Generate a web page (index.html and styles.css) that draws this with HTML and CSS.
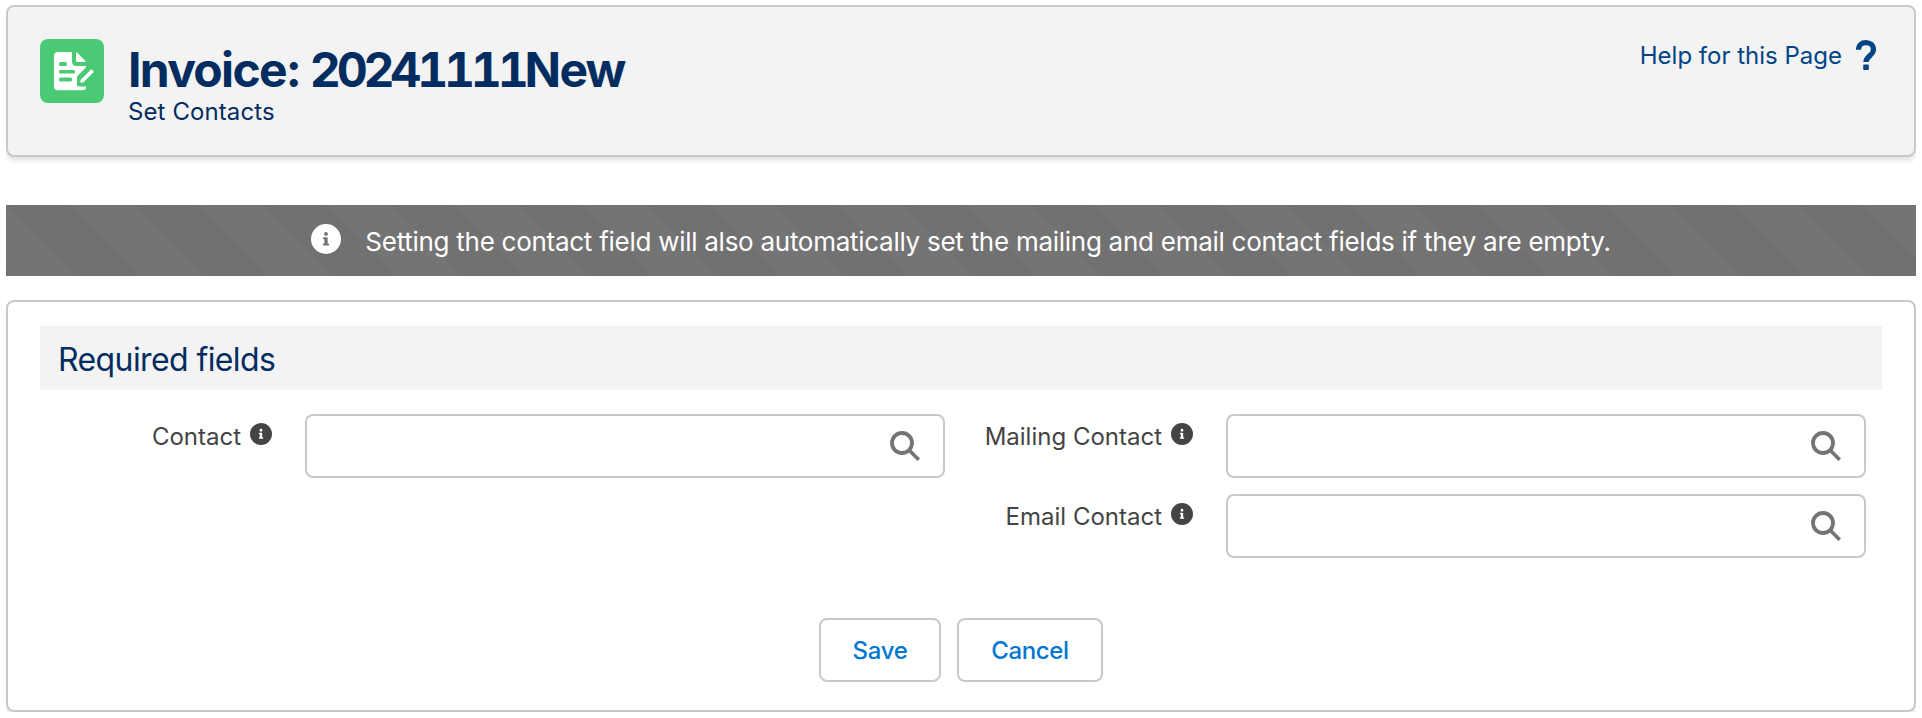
FILE: index.html
```html
<!DOCTYPE html>
<html lang="en">
<head>
    <meta charset="UTF-8">
    <meta name="viewport" content="width=device-width, initial-scale=1.0">
    <title>Set Contacts</title>
    <link rel="stylesheet" href="styles.css">
</head>
<body>

    <!-- Shared icons -->
    <svg class="icon-defs" xmlns="http://www.w3.org/2000/svg">
        <symbol id="icon-info" viewBox="0 0 30 30">
            <path fill-rule="evenodd" d="M15 0a15 15 0 1 1 0 30a15 15 0 0 1 0-30zM15 8a1.9 1.9 0 1 0 0 3.8a1.9 1.9 0 0 0 0-3.8zM12.7 13.3c-.4 0-.7.3-.7.7v.6c0 .4.3.7.7.7h.7v4.2h-.7c-.4 0-.7.3-.7.7v.7c0 .4.3.7.7.7h4.6c.4 0 .7-.3.7-.7v-.7c0-.4-.3-.7-.7-.7h-.7V14c0-.4-.3-.7-.7-.7z"/>
        </symbol>
        <symbol id="icon-search" viewBox="0 0 30 30">
            <circle cx="12" cy="12" r="10" fill="none" stroke="currentColor" stroke-width="3.8"/>
            <path d="M19 19l9.8 9.8" fill="none" stroke="currentColor" stroke-width="3.6"/>
        </symbol>
    </svg>

    <header class="page-header">
        <div class="header-icon">
            <svg width="64" height="64" viewBox="0 0 64 64">
                <path fill="#fff" d="M18 13H32V22.500Q32 27 36.500 27H46V28.500L37.500 37.200V47H46V48Q46 51.300 42 51.300H18Q14 51.300 14 47.300V17Q14 13 18 13z"/>
                <path fill="#fff" d="M36 14.200Q36 12.800 37 13.600L45.600 22.200Q46 23 44.800 23H37.200Q36 23 36 21.800z"/>
                <rect x="19" y="23" width="8" height="4" rx="1.500" fill="#4bca76"/>
                <rect x="19" y="31" width="16" height="3.600" rx="1.500" fill="#4bca76"/>
                <rect x="19" y="38.500" width="13" height="4" rx="1.500" fill="#4bca76"/>
                <path fill="#4bca76" d="M47 27.500L37.800 36.700Q37 37.600 37 39V45Q37 47.500 39.500 47.500H47V45L56 35z"/>
                <path fill="#fff" d="M41 40.500L50.700 30.800Q51.500 30 52.300 30.800L53.300 31.800Q54 32.600 53.300 33.400L43.600 43.100Q43 43.700 42 43.700H41.200Q40.400 43.700 40.400 43V41.800Q40.400 41.100 41 40.500z"/>
            </svg>
        </div>
        <div class="header-text">
            <h1>Invoice: <span class="number">20241111</span>New</h1>
            <p>Set Contacts</p>
        </div>
        <a class="help-link" href="#">
            <span>Help for this Page</span>
            <svg width="20" height="30" viewBox="0 0 20 30">
                <path d="M2.500 9.800C2.500 5 5.600 2.600 10 2.600S17.500 5.300 17.500 9.500C17.500 16 10 15.700 10 22" fill="none" stroke="currentColor" stroke-width="5.200" stroke-linecap="butt"/>
                <rect x="7.200" y="24.500" width="5.600" height="5.500" rx="1" fill="currentColor"/>
            </svg>
        </a>
    </header>

    <div class="notify">
        <svg class="notify-icon"><use href="#icon-info"/></svg>
        <span>Setting the contact field will also automatically set the mailing and email contact fields if they are empty.</span>
    </div>

    <form class="card">
        <h2>Required fields</h2>

        <div class="fields">
            <div class="column">
                <div class="field">
                    <label for="contact">Contact <svg class="info"><use href="#icon-info"/></svg></label>
                    <div class="lookup">
                        <input type="text" id="contact">
                        <svg class="search"><use href="#icon-search"/></svg>
                    </div>
                </div>
            </div>
            <div class="column">
                <div class="field">
                    <label for="mailing">Mailing Contact <svg class="info"><use href="#icon-info"/></svg></label>
                    <div class="lookup">
                        <input type="text" id="mailing">
                        <svg class="search"><use href="#icon-search"/></svg>
                    </div>
                </div>
                <div class="field">
                    <label for="email">Email Contact <svg class="info"><use href="#icon-info"/></svg></label>
                    <div class="lookup">
                        <input type="text" id="email">
                        <svg class="search"><use href="#icon-search"/></svg>
                    </div>
                </div>
            </div>
        </div>

        <div class="actions">
            <button type="button" class="save">Save</button>
            <button type="button" class="cancel">Cancel</button>
        </div>
    </form>

</body>
</html>
```
FILE: styles.css
```css
* {
    box-sizing: border-box;
}

body {
    margin: 5px 6px 0;
    font-family: Inter, "Liberation Sans", sans-serif;
    font-size: 24px;
    color: #444;
    background: #fff;
}

h1, h2, p {
    margin: 0;
}

.icon-defs {
    display: none;
}

.page-header {
    display: flex;
    align-items: flex-start;
    height: 152px;
    padding: 32px;
    background: #f3f3f3;
    border: 2px solid #c9c9c9;
    border-radius: 8px;
    box-shadow: 0 4px 4px rgba(0, 0, 0, 0.1);
    color: #032d60;
}

.header-icon {
    width: 64px;
    height: 64px;
    border-radius: 8px;
    background: #4bca76;
}

.header-text {
    flex: 1;
    margin-left: 24px;
}

h1 {
    padding-top: 3px;
    font-size: 48px;
    line-height: 56px;
    font-weight: 700;
    letter-spacing: -1.7px;
}

.number {
    font-variant-numeric: tabular-nums;
    letter-spacing: -4.2px;
}

.header-text p {
    line-height: 28px;
    letter-spacing: 0.1px;
}

.help-link {
    display: flex;
    gap: 14px;
    margin-right: 6px;
    line-height: 34px;
    color: #014486;
    text-decoration: none;
}

.help-link svg {
    margin-top: 1px;
}

.notify {
    display: flex;
    justify-content: center;
    gap: 24px;
    height: 71px;
    margin-top: 48px;
    padding: 19px 0;
    color: #fff;
    font-size: 26px;
    line-height: 36px;
    letter-spacing: -0.27px;
    background-color: #747474;
    background-image: linear-gradient(45deg, rgba(0, 0, 0, 0.025) 25%, transparent 25%, transparent 50%, rgba(0, 0, 0, 0.025) 50%, rgba(0, 0, 0, 0.025) 75%, transparent 75%);
    background-size: 128px 128px;
}

.notify-icon {
    width: 30px;
    height: 30px;
    fill: #fff;
}

.card {
    height: 412px;
    margin-top: 24px;
    padding: 24px 32px;
    border: 2px solid #c9c9c9;
    border-radius: 8px;
    box-shadow: 0 4px 4px rgba(0, 0, 0, 0.1);
}

h2 {
    height: 64px;
    padding-left: 18px;
    background: #f3f3f3;
    color: #032d60;
    font-size: 32px;
    line-height: 67px;
    font-weight: 400;
    letter-spacing: -0.6px;
}

.fields {
    display: grid;
    grid-template-columns: 1fr 1fr;
    margin-top: 24px;
}

.column {
    display: flex;
    flex-direction: column;
    gap: 16px;
    padding-right: 16px;
}

.field {
    display: flex;
    justify-content: space-between;
}

label {
    display: flex;
    justify-content: flex-end;
    gap: 9px;
    width: 232px;
    padding-top: 9px;
    line-height: 28px;
    white-space: nowrap;
}

.info {
    width: 22px;
    height: 22px;
    fill: #444;
}

.lookup {
    position: relative;
    width: 640px;
    height: 64px;
}

.lookup input {
    width: 100%;
    height: 100%;
    padding: 0 70px 0 24px;
    font: inherit;
    background: #fff;
    border: 2px solid #c9c9c9;
    border-radius: 8px;
}

.search {
    position: absolute;
    top: 17px;
    right: 25px;
    width: 30px;
    height: 30px;
    color: #747474;
}

.actions {
    display: flex;
    justify-content: center;
    gap: 16px;
    margin-top: 60px;
}

button {
    height: 64px;
    padding: 0;
    font: inherit;
    font-weight: 500;
    letter-spacing: -0.35px;
    color: #0176d3;
    background: #fff;
    border: 2px solid #c9c9c9;
    border-radius: 8px;
    cursor: pointer;
}

.save {
    width: 122px;
}

.cancel {
    width: 146px;
}
```
